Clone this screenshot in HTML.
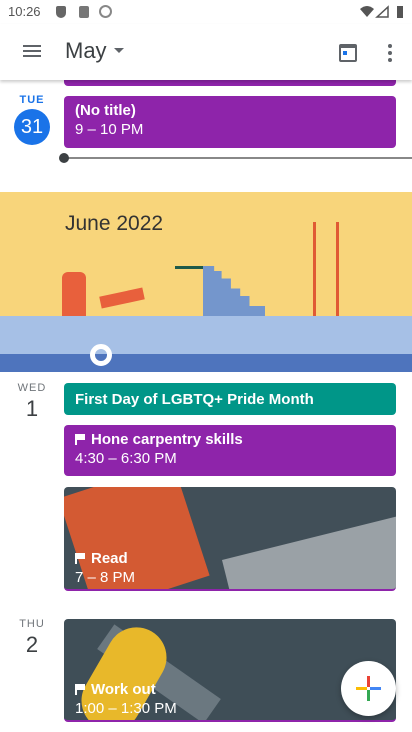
<!DOCTYPE html>
<html><head><style>
*{margin:0;padding:0;box-sizing:border-box}
body{width:412px;height:732px;overflow:hidden;background:#fff;font-family:"Liberation Sans",Arial,sans-serif;position:relative}
.a{position:absolute}
.ev{position:absolute;left:64px;width:332px;border-radius:4px;color:#fff;padding-left:11px}
.t{font-size:15px;font-weight:bold}
.s{font-size:15px}
.flag{display:inline-block;width:10px;height:11px;margin-right:6px;vertical-align:-1px;position:relative}
.flag:before{content:"";position:absolute;left:0;top:0;width:2px;height:11px;background:#fff}
.flag:after{content:"";position:absolute;left:2px;top:0;width:8px;height:6px;background:#fff}
.dl{position:absolute;width:64px;text-align:center;font-size:11px;letter-spacing:1px;color:#70757a}
.dn{position:absolute;width:64px;text-align:center;font-size:22px;color:#3c4043}
</style></head><body>
<div class="a" style="left:8px;top:4px;font-size:13px;color:#555">10:26</div>
<div class="a" style="left:56px;top:6px;width:10px;height:12px;background:#666;border-radius:2px 2px 5px 5px"></div>
<div class="a" style="left:79px;top:6px;width:10px;height:12px;background:#777;border-radius:2px"></div>
<div class="a" style="left:99px;top:5px;width:13px;height:13px;border:2px solid #888;border-radius:50%"></div>
<svg class="a" style="left:360px;top:5px" width="48" height="14"><path d="M0 4 Q7 -2 14 4 L7 12Z" fill="#555"/><path d="M17 12 L28 2 L28 12Z" fill="none" stroke="#555" stroke-width="1.5"/><rect x="37" y="1" width="6" height="12" fill="#555"/></svg>
<div class="a" style="left:0;top:24px;width:412px;height:56px;background:#fff;box-shadow:0 2px 3px rgba(0,0,0,.2);z-index:2"></div>
<div class="a" style="left:23px;top:45px;width:18px;height:2px;background:#5f6368;box-shadow:0 5px 0 #5f6368,0 10px 0 #5f6368;z-index:3"></div>
<div class="a" style="left:65px;top:38px;font-size:22px;color:#3c4043;z-index:3">May</div>
<div class="a" style="left:114px;top:48px;border:5px solid transparent;border-top-color:#5f6368;z-index:3"></div>
<div class="a" style="left:339px;top:44px;width:18px;height:18px;border:2px solid #5f6368;border-top-width:4px;border-radius:2px;z-index:3"></div>
<div class="a" style="left:343px;top:51px;width:4px;height:4px;background:#1a73e8;z-index:3"></div>
<div class="a" style="left:388px;top:44px;width:4px;height:4px;border-radius:50%;background:#5f6368;box-shadow:0 7px 0 #5f6368,0 14px 0 #5f6368;z-index:3"></div>
<div class="ev" style="top:70px;height:16px;background:#8e24aa"></div>
<div class="dl" style="top:94px;color:#1a73e8;font-weight:bold">TUE</div>
<div class="a" style="left:14px;top:109px;width:36px;height:36px;border-radius:50%;background:#1a73e8;color:#fff;font-size:20px;text-align:center;line-height:36px">31</div>
<div class="ev" style="top:96px;height:52px;background:#8e24aa;padding-top:6px"><div class="t">(No title)</div><div class="s" style="margin-top:2px">9 – 10 PM</div></div>
<div class="a" style="left:64px;top:157px;width:348px;height:2px;background:#888"></div>
<div class="a" style="left:59px;top:153px;width:10px;height:10px;border-radius:50%;background:#3c4043"></div>
<div class="a" style="left:0;top:192px;width:412px;height:180px;background:#f8d57b;overflow:hidden">
<div class="a" style="left:65px;top:20px;font-size:21px;color:#333">June 2022</div>
<div class="a" style="left:0;top:124px;width:412px;height:42px;background:#a6c0e6"></div>
<div class="a" style="left:0;top:162px;width:412px;height:18px;background:#4e74bd"></div>
<div class="a" style="left:62px;top:80px;width:24px;height:44px;background:#e8603c;border-radius:6px 6px 0 0"></div>
<div class="a" style="left:100px;top:100px;width:44px;height:12px;background:#e8603c;transform:rotate(-12deg)"></div>
<div class="a" style="left:175px;top:74px;width:28px;height:3px;background:#1f5a4a"></div>
<div class="a" style="left:203px;top:74px;width:62px;height:50px;background:#7496cc;clip-path:polygon(0 0,18% 0,18% 10%,30% 10%,30% 25%,45% 25%,45% 45%,60% 45%,60% 60%,75% 60%,75% 80%,100% 80%,100% 100%,0 100%)"></div>
<div class="a" style="left:313px;top:30px;width:26px;height:94px;border-left:3px solid #e05a34;border-right:3px solid #e05a34"></div>
<div class="a" style="left:90px;top:152px;width:22px;height:22px;border-radius:50%;border:5px solid #fff"></div>
</div>
<div class="dl" style="top:382px">WED</div>
<div class="dn" style="top:396px">1</div>
<div class="ev" style="top:383px;height:32px;background:#009688;padding-top:8px"><div class="t">First Day of LGBTQ+ Pride Month</div></div>
<div class="ev" style="top:425px;height:51px;background:#8e24aa;padding-top:6px"><div class="t"><span class="flag"></span>Hone carpentry skills</div><div class="s" style="margin-top:2px">4:30 – 6:30 PM</div></div>
<div class="ev" style="top:487px;height:104px;background:#414f58;border-bottom:2px solid #8e24aa;overflow:hidden;padding-top:63px">
<div class="a" style="left:10px;top:-10px;width:120px;height:120px;background:#d35a33;transform:rotate(-18deg)"></div>
<div class="a" style="left:165px;top:50px;width:180px;height:80px;background:#9aa1a6;transform:rotate(-14deg)"></div>
<div style="position:relative"><div class="t"><span class="flag"></span>Read</div><div class="s" style="margin-top:2px">7 – 8 PM</div></div></div>
<div class="dl" style="top:618px">THU</div>
<div class="dn" style="top:632px">2</div>
<div class="ev" style="top:619px;height:103px;background:#3f4e57;border-bottom:2px solid #8e24aa;overflow:hidden;padding-top:62px">
<div class="a" style="left:10px;top:-10px;width:30px;height:130px;background:#6b7880;transform:rotate(-55deg);left:80px"></div>
<div class="a" style="left:30px;top:5px;width:60px;height:110px;background:#e8b82a;border-radius:30px;transform:rotate(30deg)"></div>
<div style="position:relative"><div class="t"><span class="flag"></span>Work out</div><div class="s" style="margin-top:2px">1:00 – 1:30 PM</div></div></div>
<div class="a" style="left:341px;top:661px;width:55px;height:55px;border-radius:50%;background:#fff;box-shadow:0 2px 6px rgba(0,0,0,.3)"></div>
<svg class="a" style="left:356px;top:676px" width="25" height="25"><rect x="11" y="0" width="3" height="11" fill="#ea4335"/><rect x="14" y="11" width="11" height="3" fill="#4285f4"/><rect x="11" y="14" width="3" height="11" fill="#34a853"/><rect x="0" y="11" width="11" height="3" fill="#fbbc04"/></svg>
</body></html>
